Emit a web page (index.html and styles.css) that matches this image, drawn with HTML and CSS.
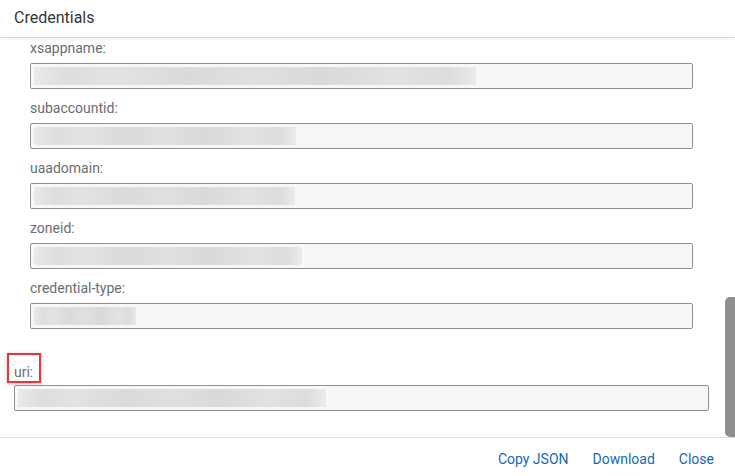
FILE: index.html
```html
<!DOCTYPE html>
<html lang="en">
<head>
<meta charset="utf-8">
<title>Credentials</title>
<link rel="stylesheet" href="styles.css">
</head>
<body>
<div class="dialog">
  <header class="dlg-header">Credentials</header>
  <main class="dlg-content">
    <div class="field">
      <label class="lbl">xsappname:</label>
      <div class="input"><span class="blur" style="width:442px"></span></div>
    </div>
    <div class="field">
      <label class="lbl">subaccountid:</label>
      <div class="input"><span class="blur" style="width:262px"></span></div>
    </div>
    <div class="field">
      <label class="lbl">uaadomain:</label>
      <div class="input"><span class="blur" style="width:261px"></span></div>
    </div>
    <div class="field">
      <label class="lbl">zoneid:</label>
      <div class="input"><span class="blur" style="width:268px"></span></div>
    </div>
    <div class="field">
      <label class="lbl">credential-type:</label>
      <div class="input"><span class="blur" style="width:102px"></span></div>
    </div>
    <div class="field field-uri">
      <label class="lbl lbl-marked">uri:</label>
      <div class="input"><span class="blur" style="width:308px"></span></div>
    </div>
    <div class="scrollbar"></div>
  </main>
  <footer class="dlg-footer">
    <button class="btn">Copy JSON</button>
    <button class="btn">Download</button>
    <button class="btn">Close</button>
  </footer>
</div>
</body>
</html>
```
FILE: styles.css
```css
* { box-sizing: border-box; }
html, body { margin: 0; padding: 0; background: #fff; }
body {
  font-family: Roboto, "Liberation Sans", sans-serif;
  color: #32363a;
  width: 735px;
  height: 476px;
  overflow: hidden;
}
.dialog {
  display: flex;
  flex-direction: column;
  height: 476px;
}
.dlg-header {
  height: 38px;
  padding: 0 14px;
  display: flex;
  align-items: center;
  font-size: 16px;
  color: #32363a;
  border-bottom: 1px solid #d9d9d9;
  box-shadow: 0 1px 3px rgba(0,0,0,0.08);
  position: relative;
  z-index: 1;
  padding-bottom: 2px;
}
.dlg-content {
  position: relative;
  flex: 1;
  padding: 1px 42px 0 30px;
  overflow: hidden;
}
.field {
  display: flex;
  flex-direction: column;
  margin-bottom: 10px;
}
.lbl {
  height: 18px;
  line-height: 18px;
  font-size: 14px;
  color: #6a6d70;
  margin-bottom: 6px;
}
.input {
  height: 26px;
  border: 1px solid #89919a;
  border-radius: 2px;
  background: #f7f7f7;
  padding: 3px 3px;
  display: flex;
}
.blur {
  display: block;
  height: 18px;
  background: linear-gradient(90deg, #e9e9e9 0%, #dddddd 8%, #e3e3e3 18%, #dadada 35%, #e0e0e0 50%, #d9d9d9 65%, #e2e2e2 82%, #dcdcdc 94%, #ebebeb 100%);
  filter: blur(0.6px);
}
.field-uri {
  margin-left: -16px;
  margin-right: -16px;
  margin-top: 24px;
}
.lbl-marked {
  align-self: flex-start;
  height: 30px;
  line-height: 18px;
  margin-left: -7px;
  margin-bottom: 2px;
  padding: 8px 6px 0 5px;
  border: 2px solid #e9353b;
  box-shadow: 0 1px 4px rgba(0,0,0,0.25);
  color: #6a6d70;
}
.scrollbar {
  position: absolute;
  right: -4px;
  top: 259px;
  width: 14px;
  height: 140px;
  border-radius: 5px;
  background: #8f8f8f;
}
.dlg-footer {
  height: 39px;
  border-top: 1px solid #e1e1e1;
  display: flex;
  justify-content: flex-end;
  align-items: center;
  padding: 3px 13px 0 0;
  gap: 8px;
}
.btn {
  font-family: inherit;
  font-size: 14px;
  color: #1467b8;
  background: none;
  border: 0;
  padding: 4px 8px;
  cursor: pointer;
}
```
